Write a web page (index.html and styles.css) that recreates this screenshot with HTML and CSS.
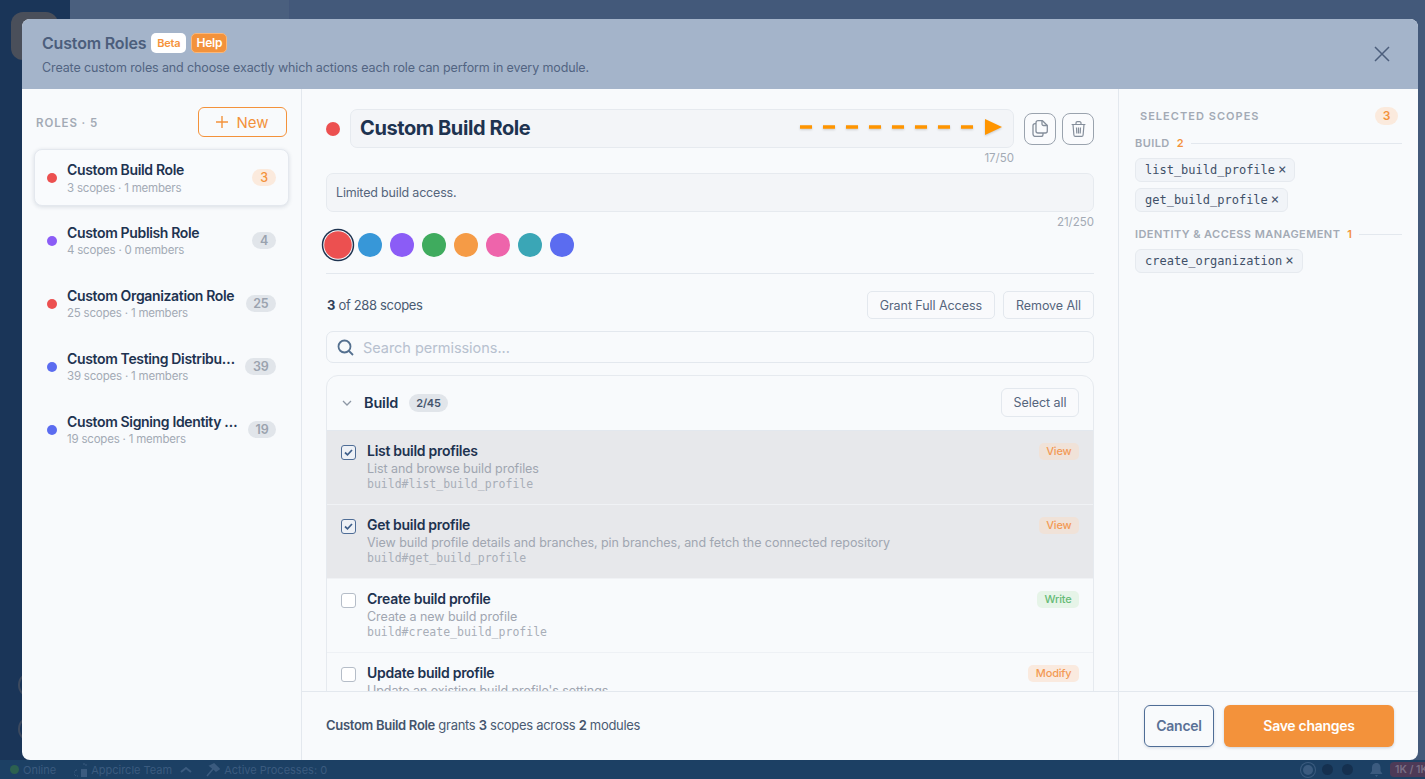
FILE: index.html
```html
<!DOCTYPE html>
<html lang="en">
<head>
<meta charset="utf-8">
<title>Custom Roles</title>
<link rel="stylesheet" href="styles.css">
</head>
<body>
<div class="app">
  <aside class="rail">
    <div class="rail-avatar"></div>
    <div class="rail-spacer"></div>
    <div class="rail-ring"></div>
    <div class="rail-ring"></div>
  </aside>
  <div class="canvas"><div class="canvas-side"></div></div>
  <footer class="status">
    <span class="st-dot"></span><span>Online</span>
    <svg class="st-team-ic" width="14" height="14" viewBox="0 0 14 14"><path d="M3 7a3 3 0 0 0 0 6h1M9 1h3v3" fill="none" stroke="currentColor" stroke-width="1" stroke-dasharray="2 1"/><rect x="7" y="6" width="6" height="8" fill="currentColor"/></svg>
    <span>Appcircle Team</span>
    <svg class="st-chev" width="12" height="8" viewBox="0 0 12 8"><path d="M1 6l5-4 5 4" fill="none" stroke="currentColor" stroke-width="2"/></svg>
    <svg class="st-ham" width="14" height="14" viewBox="0 0 14 14"><path d="M1 13l6-7M4 3l4-2 5 5-3 2-2-2z" fill="currentColor" stroke="currentColor" stroke-width="1.6"/></svg>
    <span>Active Processes: 0</span>
    <span class="st-right">
      <span class="st-circle ring"></span><span class="st-circle"></span><span class="st-circle"></span>
      <svg class="st-bell" width="13" height="14" viewBox="0 0 13 14"><path d="M6.500 0c3 0 4 2.500 4 5v3l2 3H0l2-3V5c0-2.500 1-5 4.500-5zM5 12h3l-1.500 2z" fill="currentColor"/></svg>
      <span class="st-quota">1K / 1K</span>
    </span>
  </footer>
</div>

<div class="modal">
  <header class="m-head">
    <div class="m-head-text">
      <div class="m-title-row">
        <h1 class="m-title">Custom Roles</h1>
        <span class="pill pill-beta">Beta</span>
        <span class="pill pill-help">Help</span>
      </div>
      <p class="m-sub">Create custom roles and choose exactly which actions each role can perform in every module.</p>
    </div>
    <svg class="m-close" width="16" height="16" viewBox="0 0 16 16"><path d="M1 1l14 14M15 1L1 15" stroke="currentColor" stroke-width="1.500" fill="none"/></svg>
  </header>

  <div class="m-body">
    <section class="roles">
      <div class="roles-head">
        <span class="roles-label">ROLES · 5</span>
        <button class="btn-new"><svg width="12" height="12" viewBox="0 0 12 12"><path d="M6 0v12M0 6h12" stroke="currentColor" stroke-width="1.400"/></svg>New</button>
      </div>
      <div class="role active">
        <span class="dot red"></span>
        <div class="role-text"><div class="role-name">Custom Build Role</div><div class="role-sub">3 scopes · 1 members</div></div>
        <span class="count on">3</span>
      </div>
      <div class="role">
        <span class="dot purple"></span>
        <div class="role-text"><div class="role-name">Custom Publish Role</div><div class="role-sub">4 scopes · 0 members</div></div>
        <span class="count">4</span>
      </div>
      <div class="role">
        <span class="dot red"></span>
        <div class="role-text"><div class="role-name">Custom Organization Role</div><div class="role-sub">25 scopes · 1 members</div></div>
        <span class="count">25</span>
      </div>
      <div class="role">
        <span class="dot indigo"></span>
        <div class="role-text"><div class="role-name">Custom Testing Distribution Role</div><div class="role-sub">39 scopes · 1 members</div></div>
        <span class="count">39</span>
      </div>
      <div class="role">
        <span class="dot indigo"></span>
        <div class="role-text"><div class="role-name">Custom Signing Identity Role</div><div class="role-sub">19 scopes · 1 members</div></div>
        <span class="count">19</span>
      </div>
    </section>

    <section class="editor">
      <div class="ed-scroll">
        <div class="name-row">
          <span class="name-dot"></span>
          <div class="name-input">
            <span>Custom Build Role</span>
            <svg class="arrow" width="204" height="16" viewBox="0 0 204 16"><path d="M0 8h174" stroke="#ff9500" stroke-width="3.500" stroke-dasharray="12 11" fill="none"/><path d="M185 0l17 8-17 8z" fill="#ff9500"/></svg>
          </div>
          <button class="icon-btn"><svg width="16" height="17" viewBox="0 0 16 17" fill="none" stroke="currentColor" stroke-width="1.300" stroke-linejoin="round"><path d="M6 .7h4.500l4.800 4.800V11a2 2 0 0 1-2 2H6a2 2 0 0 1-2-2V2.700a2 2 0 0 1 2-2z"/><path d="M10 .7v3.300a1.500 1.500 0 0 0 1.500 1.500h3.800"/><path d="M4 3.700H3a2 2 0 0 0-2 2V14a2.500 2.500 0 0 0 2.500 2.500H9a2 2 0 0 0 2-2V13"/></svg></button>
          <button class="icon-btn"><svg width="15" height="16" viewBox="0 0 15 16" fill="none" stroke="currentColor" stroke-width="1.200" stroke-linejoin="round"><path d="M.6 3.500h13.800M5 3.500V2a1.300 1.300 0 0 1 1.300-1.300h2.400A1.300 1.300 0 0 1 10 2v1.500"/><path d="M2 3.500l.9 10.500a1.500 1.500 0 0 0 1.500 1.400h6.200a1.500 1.500 0 0 0 1.500-1.400L13 3.500"/><path d="M5.500 6.500l.3 6M7.500 6.500v6M9.500 6.500l-.3 6"/></svg></button>
        </div>
        <div class="cnt cnt-name">17/50</div>
        <div class="desc-input">Limited build access.</div>
        <div class="cnt cnt-desc">21/250</div>
        <div class="swatches">
          <span class="sw sel red"></span><span class="sw blue"></span><span class="sw purple"></span><span class="sw green"></span><span class="sw orange"></span><span class="sw pink"></span><span class="sw teal"></span><span class="sw indigo"></span>
        </div>
        <div class="summary">
          <span class="sum-text"><b>3</b> of 288 scopes</span>
          <span class="sum-btns"><button class="btn-ghost">Grant Full Access</button><button class="btn-ghost">Remove All</button></span>
        </div>
        <div class="search">
          <svg width="17" height="17" viewBox="0 0 17 17" fill="none" stroke="#54708f" stroke-width="1.800"><circle cx="7.500" cy="7.500" r="6"/><path d="M12 12l4 4"/></svg>
          <span>Search permissions...</span>
        </div>
        <div class="module">
          <div class="mod-head">
            <svg class="mod-chev" width="10" height="6" viewBox="0 0 10 6"><path d="M1 1l4 4 4-4" fill="none" stroke="currentColor" stroke-width="1.300"/></svg>
            <span class="mod-name">Build</span>
            <span class="mod-count">2/45</span>
            <button class="btn-ghost sel-all">Select all</button>
          </div>
          <div class="perm checked">
            <span class="cb on"><svg width="9" height="7" viewBox="0 0 9 7"><path d="M1 3.500l2.500 2.300L8 1" fill="none" stroke="#3f5f8a" stroke-width="1.700"/></svg></span>
            <div class="perm-text"><div class="perm-name">List build profiles</div><div class="perm-desc">List and browse build profiles</div><code class="perm-code">build#list_build_profile</code></div>
            <span class="tag view">View</span>
          </div>
          <div class="perm checked">
            <span class="cb on"><svg width="9" height="7" viewBox="0 0 9 7"><path d="M1 3.500l2.500 2.300L8 1" fill="none" stroke="#3f5f8a" stroke-width="1.700"/></svg></span>
            <div class="perm-text"><div class="perm-name">Get build profile</div><div class="perm-desc">View build profile details and branches, pin branches, and fetch the connected repository</div><code class="perm-code">build#get_build_profile</code></div>
            <span class="tag view">View</span>
          </div>
          <div class="perm">
            <span class="cb"></span>
            <div class="perm-text"><div class="perm-name">Create build profile</div><div class="perm-desc">Create a new build profile</div><code class="perm-code">build#create_build_profile</code></div>
            <span class="tag write">Write</span>
          </div>
          <div class="perm">
            <span class="cb"></span>
            <div class="perm-text"><div class="perm-name">Update build profile</div><div class="perm-desc">Update an existing build profile's settings</div><code class="perm-code">build#update_build_profile</code></div>
            <span class="tag view">Modify</span>
          </div>
        </div>
      </div>
    </section>

    <section class="scopes">
      <div class="sc-head"><span class="sc-title">SELECTED SCOPES</span><span class="sc-badge">3</span></div>
      <div class="sc-group"><span>BUILD</span><b>2</b><i></i></div>
      <div class="chips">
        <span class="chip">list_build_profile<em>×</em></span>
        <span class="chip">get_build_profile<em>×</em></span>
      </div>
      <div class="sc-group second"><span>IDENTITY &amp; ACCESS MANAGEMENT</span><b>1</b><i></i></div>
      <div class="chips">
        <span class="chip">create_organization<em>×</em></span>
      </div>
    </section>

    <div class="foot-left"><span><b>Custom Build Role</b> grants <b>3</b> scopes across <b>2</b> modules</span></div>
    <div class="foot-right">
      <button class="btn-cancel">Cancel</button>
      <button class="btn-save">Save changes</button>
    </div>
  </div>
</div>
</body>
</html>
```

FILE: styles.css
```css
* { box-sizing: border-box; }
html, body { margin: 0; height: 100%; overflow: hidden; }
body { font-family: Inter, "Liberation Sans", sans-serif; color: #1e3350; background: #43597a; }
button { font-family: inherit; cursor: pointer; }
h1, p { margin: 0; }

.app { height: 779px; display: grid; grid-template-columns: 70px 1fr; grid-template-rows: 1fr 19px; }
.rail { background: #1a3558; padding: 12px 0 0 11px; display: flex; flex-direction: column; }
.rail-avatar { width: 47px; height: 48px; border-radius: 12px; background: #4a4f5a; }
.rail-spacer { flex: 1; }
.rail-ring { width: 26px; height: 26px; border-radius: 50%; border: 2px solid #3d4a5f; margin: 0 0 18px 7px; }
.canvas { background: #43597a; display: flex; }
.canvas-side { width: 220px; background: #4a5f7e; border-right: 1px solid #43577a; }
.status { grid-column: 1 / 3; background: #1c4064; color: #3b5b7f; font-size: 11px; display: flex; align-items: center; padding-left: 10px; white-space: nowrap; overflow: hidden; }
.st-dot { width: 9px; height: 9px; border-radius: 50%; background: #2c6150; margin-right: 4px; }
.st-team-ic { margin: 0 3px 0 18px; }
.st-chev { margin: 0 14px 0 8px; }
.st-ham { margin-right: 4px; }
.st-right { margin-left: auto; display: flex; align-items: center; }
.st-circle { width: 11px; height: 11px; border-radius: 50%; background: #15304f; margin-left: 9px; }
.st-circle.ring { background: #3b5b7f; box-shadow: 0 0 0 2px #1c4064, 0 0 0 3px #3b5b7f; width: 10px; height: 10px; }
.st-bell { margin-left: 17px; }
.st-quota { margin-left: 7.500px; width: 35px; height: 15px; background: #4d3a57; border-radius: 4px 0 0 4px; color: #7a6f86; font-size: 10.500px; font-weight: 600; line-height: 15px; padding-left: 5px; overflow: hidden; }

.modal { position: absolute; left: 22px; top: 19px; width: 1396px; height: 741px; border-radius: 8px; overflow: hidden; background: #f8fafc; display: flex; flex-direction: column; letter-spacing: -.011em; }
.m-head { height: 70px; flex: none; background: #a4b4ca; padding: 14px 28px 0 20px; display: flex; justify-content: space-between; color: #4c5e7c; }
.m-title-row { display: flex; align-items: center; height: 20px; }
.m-title { font-size: 16px; line-height: 20px; font-weight: 600; margin-right: 5px; }
.pill { height: 20px; font-size: 11px; line-height: 18px; font-weight: 600; border-radius: 5px; margin-right: 5px; border: 1px solid transparent; text-align: center; }
.pill-beta { width: 35px; background: #fff; color: #f5923a; }
.pill-help { width: 36px; background: #f3923b; color: #fff; border-color: #f9b77a; font-size: 12px; }
.m-sub { font-size: 12.500px; letter-spacing: -.0095em; line-height: 16px; margin-top: 7px; color: #526482; }
.m-close { margin-top: 13px; }

.m-body { flex: 1; min-height: 0; display: grid; grid-template-columns: 280px 817px 299px; grid-template-rows: 602px 69px; }
.roles { grid-column: 1; grid-row: 1 / 3; border-right: 1px solid #e3e8ee; padding: 18px 12px 0 12px; }
.roles-head { display: flex; align-items: center; justify-content: space-between; height: 30px; margin-bottom: 12px; padding: 0 2px 0 2px; }
.roles-label { font-size: 11.500px; font-weight: 600; letter-spacing: .9px; color: #a3aab5; padding-top: 2px; }
.btn-new { width: 89px; height: 30px; border: 1px solid #f3923b; border-radius: 6px; background: transparent; color: #f3923b; font-size: 15px; font-weight: 400; display: flex; align-items: center; justify-content: center; gap: 8px; padding: 0; }
.role { height: 57px; margin-bottom: 6px; width: 255px; padding: 0 12px; display: flex; align-items: center; border-radius: 8px; border: 1px solid transparent; }
.role.active { background: #f9fbfd; border-color: #e4e8ee; box-shadow: 0 1px 4px rgba(30,50,80,.14); }
.role.active .role-text { padding-top: 1px; }
.role.active .role-name { margin-bottom: 1px; }
.dot { width: 10px; height: 10px; border-radius: 50%; flex: none; margin-right: 10px; }
.dot.red { background: #ec5050; }
.dot.purple { background: #8b5cf6; }
.dot.indigo { background: #5b6cf0; }
.role-text { flex: 1; min-width: 0; }
.role-name { font-size: 14px; line-height: 18px; font-weight: 600; letter-spacing: -.025em; color: #1e3350; white-space: nowrap; overflow: hidden; text-overflow: ellipsis; }
.role-sub { font-size: 11.500px; letter-spacing: -.018em; line-height: 16px; color: #a3aab5; white-space: nowrap; }
.count { flex: none; min-width: 24px; height: 17px; padding: 0 7.500px; margin-left: 10px; border-radius: 9px; background: #e1e5ea; color: #9aa2ae; font-size: 12.500px; font-weight: 600; line-height: 17px; text-align: center; }
.count.on { background: #fbeadd; color: #f3923b; font-weight: 500; }

.editor { grid-column: 2; grid-row: 1; border-right: 1px solid #e3e8ee; min-height: 0; overflow: hidden; }
.ed-scroll { padding: 20px 24px 0 24px; }
.name-row { display: flex; align-items: center; height: 39px; }
.name-dot { width: 14px; height: 14px; border-radius: 50%; background: #ec5050; margin-right: 10px; flex: none; }
.name-input { position: relative; width: 664px; height: 39px; flex: none; background: #f3f5f8; border: 1px solid #e6eaef; border-radius: 7px; font-size: 20px; font-weight: 700; letter-spacing: -.02em; color: #1e3350; line-height: 37px; padding-left: 9px; margin-right: 10px; }
.arrow { position: absolute; left: 449px; top: 9px; filter: drop-shadow(0 1px 1px rgba(0,0,0,.18)); }
.icon-btn { width: 32px; height: 32px; flex: none; padding: 0; border: 1px solid #9aa3ae; border-radius: 8px; background: #fafbfd; color: #858e9b; display: flex; align-items: center; justify-content: center; }
.icon-btn + .icon-btn { margin-left: 6px; }
.cnt { font-size: 11.500px; letter-spacing: 0; line-height: 13px; color: #a3aab5; }
.cnt-name { width: 688px; text-align: right; margin-top: 4px; }
.desc-input { height: 39px; margin-top: 8px; background: #f3f5f8; border: 1px solid #e6eaef; border-radius: 7px; font-size: 12.500px; line-height: 38px; padding-left: 9px; color: #55657c; }
.cnt-desc { text-align: right; margin-top: 4px; }
.swatches { display: flex; gap: 8px; margin-top: 4px; padding-bottom: 16px; border-bottom: 1px solid #e3e8ee; }
.sw { width: 24px; height: 24px; border-radius: 50%; }
.sw.sel { transform: scale(1.15); box-shadow: 0 0 0 .8px #f8fafc, 0 0 0 2.100px #1e3350; }
.sw.red { background: #ec5050; }
.sw.blue { background: #3797d8; }
.sw.purple { background: #8b5cf6; }
.sw.green { background: #3fab5e; }
.sw.orange { background: #f59b46; }
.sw.pink { background: #ee64ab; }
.sw.teal { background: #3aa6b6; }
.sw.indigo { background: #5b6cf0; }
.summary { display: flex; align-items: center; justify-content: space-between; height: 28px; margin-top: 17px; }
.sum-text { font-size: 13px; letter-spacing: -.025em; color: #4a5a72; padding-left: 1px; }
.sum-text b { color: #2f4058; font-weight: 700; }
.sum-btns { display: flex; gap: 8px; }
.btn-ghost { height: 28px; padding: 0 12px; background: #f9fafc; border: 1px solid #e3e8ee; border-radius: 5px; font-size: 12.500px; letter-spacing: -.005em; color: #55657c; white-space: nowrap; }
.search { height: 32px; margin-top: 12px; border: 1px solid #e3e8ee; border-radius: 7px; display: flex; align-items: center; padding-left: 10px; gap: 9px; font-size: 14.500px; letter-spacing: -.003em; color: #b7c1cf; }
.module { margin-top: 12px; border: 1px solid #e6eaef; border-radius: 12px 12px 0 0; }
.mod-head { height: 55px; display: flex; align-items: center; padding: 0 14px 1px 15px; border-bottom: 1px solid #e3e8ee; }
.mod-chev { color: #8d97a5; margin-right: 12px; flex: none; }
.mod-name { font-size: 14.500px; font-weight: 600; color: #1e3350; margin-right: 11px; }
.mod-count { height: 18px; line-height: 18px; padding: 0 7px; border-radius: 9px; background: #e1e5ea; font-size: 11px; font-weight: 600; color: #44546c; }
.sel-all { margin-left: auto; width: 78px; height: 29px; padding: 0; border-radius: 6px; }
.perm { height: 74px; padding: 12px 14px 0 14px; display: flex; align-items: flex-start; border-bottom: 1px solid #eef1f5; }
.perm.checked { background: #e7e8eb; border-bottom-color: #f0f2f5; }
.cb { width: 15px; height: 15px; margin: 2px 11px 0 0; flex: none; background: #fff; border: 1.200px solid #b5bdc8; border-radius: 3px; display: flex; align-items: center; justify-content: center; }
.cb.on { background: #eef1f6; border-color: #4f6d96; }
.perm-text { flex: 1; min-width: 0; }
.perm-name { font-size: 14px; letter-spacing: -.02em; line-height: 16px; font-weight: 600; color: #1e3350; }
.perm-desc { font-size: 12.500px; letter-spacing: -.004em; line-height: 16px; margin-top: 2px; color: #a0a6b1; }
.perm-code { display: block; font-family: "DejaVu Sans Mono", monospace; font-size: 11.500px; letter-spacing: 0; line-height: 14px; color: #a8aeb8; }
.tag { flex: none; height: 17px; line-height: 17px; padding: 0 7.500px; border-radius: 5px; font-size: 11px; font-weight: 500; }
.tag.view { background: #faeadf; color: #f39a55; }
.perm.checked .tag.view { background: #f0e2d8; }
.tag.write { background: #e6f4e8; color: #66bb77; }

.scopes { grid-column: 3; grid-row: 1; padding: 0 16px; }
.sc-head { display: flex; align-items: center; justify-content: space-between; height: 18px; margin-top: 18px; padding: 0 4px 0 5px; }
.sc-title { font-size: 11px; font-weight: 600; letter-spacing: 1.030px; color: #a3aab5; }
.sc-badge { width: 23px; height: 18px; border-radius: 9px; background: #fbeadd; color: #f3923b; font-size: 12px; font-weight: 600; line-height: 18px; text-align: center; }
.sc-group { display: flex; align-items: center; height: 14px; margin-top: 11px; font-size: 11px; font-weight: 600; letter-spacing: .43px; color: #a3aab5; }
.sc-group.second { margin-top: 15px; }
.sc-group b { color: #f3923b; margin-left: 7px; font-weight: 600; }
.sc-group i { flex: 1; height: 1px; background: #e3e8ee; margin-left: 7px; }
.chips { display: flex; flex-direction: column; align-items: flex-start; gap: 6px; margin-top: 8px; }
.chip { height: 24px; padding: 0 8px 0 9px; font-family: "DejaVu Sans Mono", monospace; font-size: 12px; letter-spacing: 0; line-height: 21px; color: #3f5068; background: #f1f4f8; border: 1px solid #e6eaef; border-radius: 6px; white-space: nowrap; }
.chip em { font-style: normal; font-size: 14px; margin-left: 3px; }

.foot-left { grid-column: 2; grid-row: 2; border-top: 1px solid #e3e8ee; border-right: 1px solid #e3e8ee; padding: 0 0 2px 24px; display: flex; align-items: center; font-size: 13px; letter-spacing: -.023em; color: #4a5a72; white-space: nowrap; }
.foot-left b { font-weight: 600; color: #44546c; }
.foot-right { grid-column: 3; grid-row: 2; border-top: 1px solid #e3e8ee; display: flex; gap: 10px; padding: 13px 0 0 25px; }
.btn-cancel { width: 70px; height: 42px; background: transparent; border: 1px solid #4f6d96; border-radius: 6px; color: #5a7196; font-size: 14px; font-weight: 600; letter-spacing: -.02em; padding: 0 0 2px; box-shadow: 0 1px 3px rgba(30,50,80,.15); }
.btn-save { width: 170px; height: 42px; background: #f3923b; border: 0; border-radius: 6px; color: #fff; font-size: 14px; font-weight: 600; letter-spacing: -.02em; padding: 0 0 2px; box-shadow: 0 1px 3px rgba(30,50,80,.2); }
```
